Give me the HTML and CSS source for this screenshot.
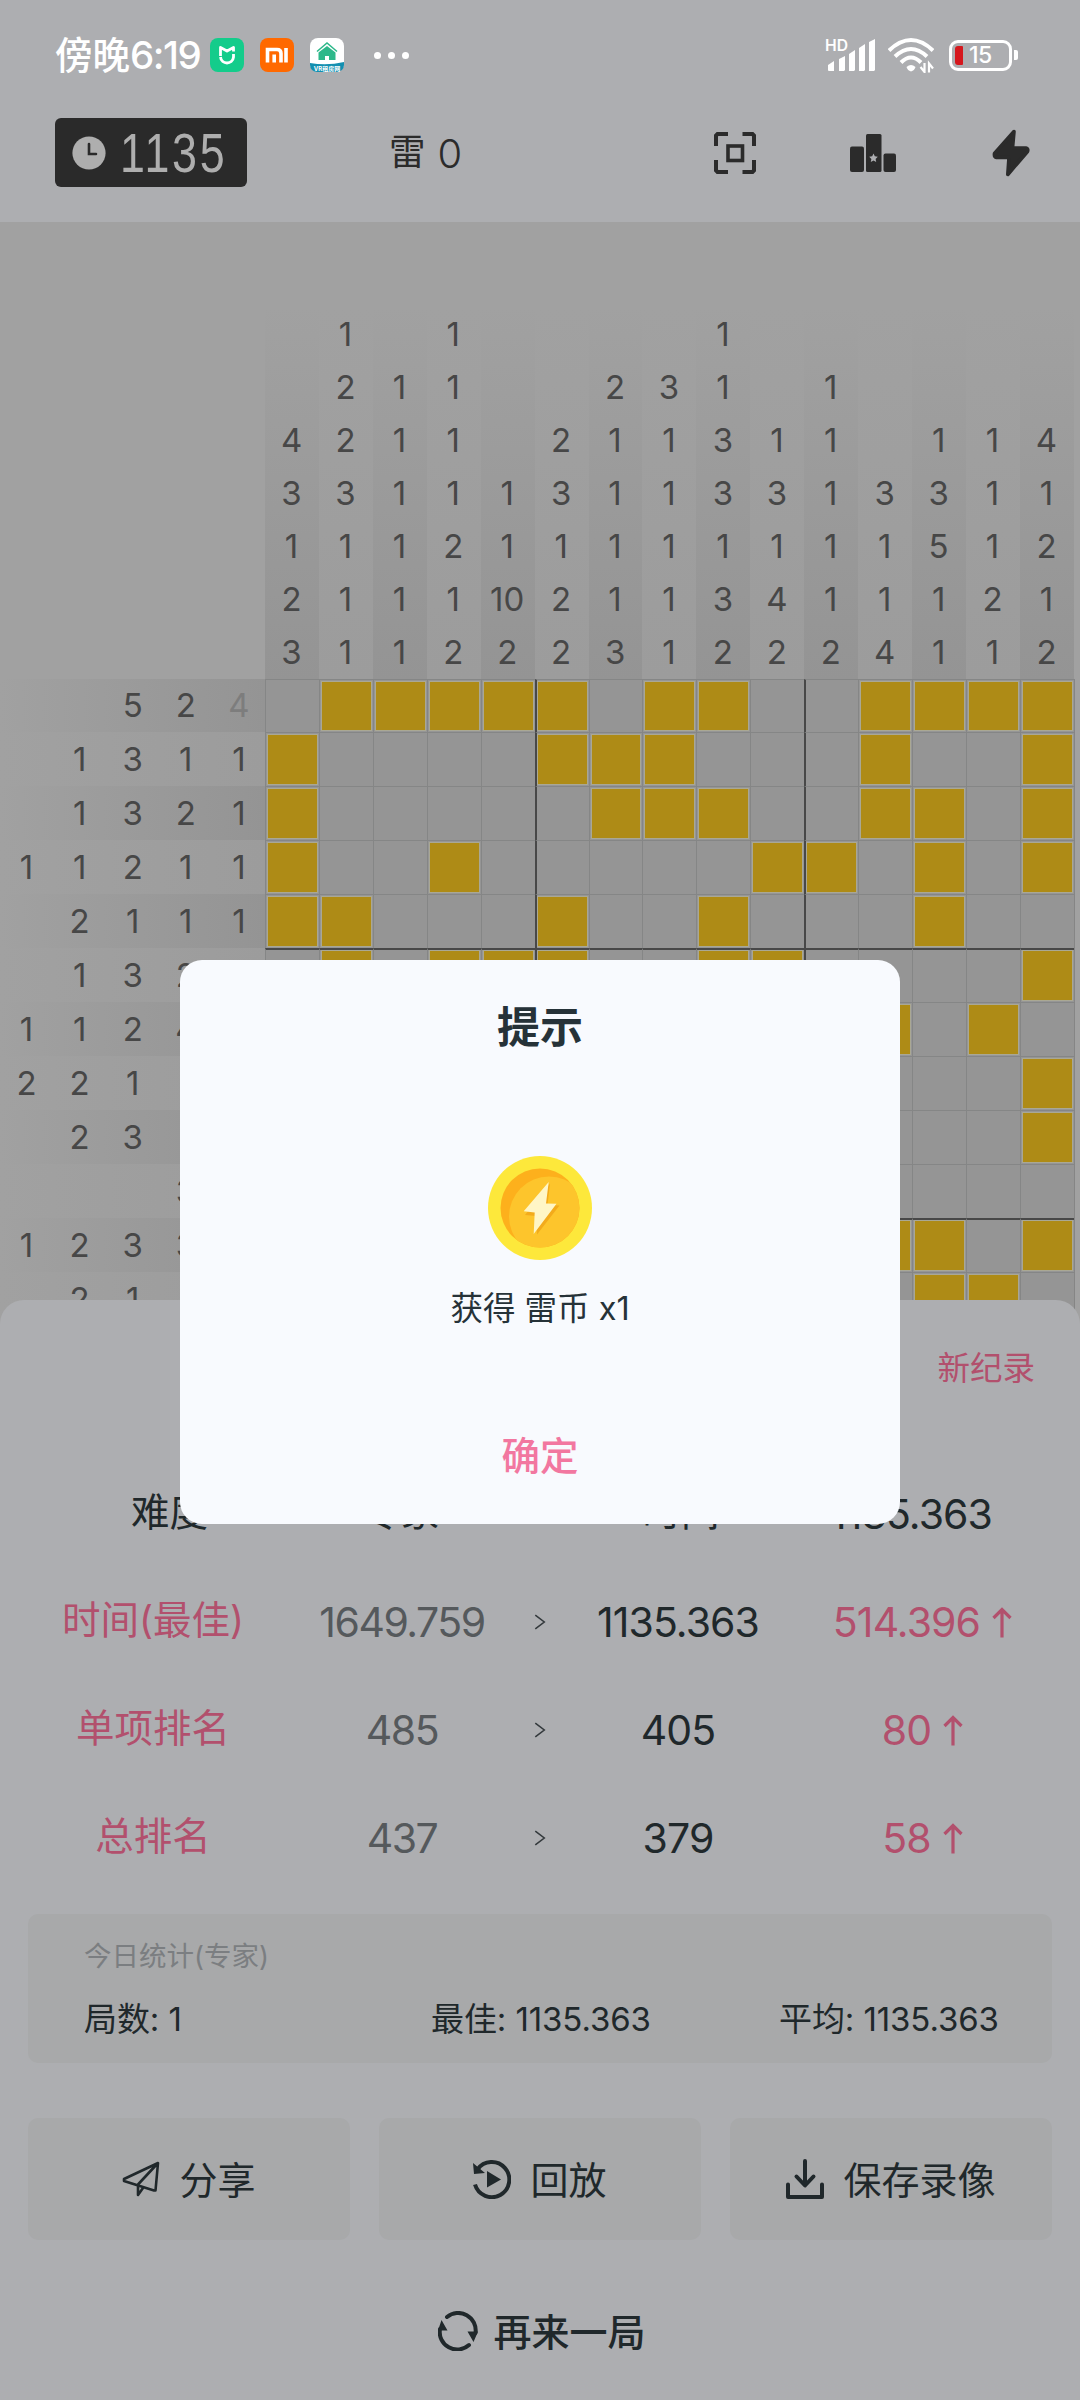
FILE: index.html
```html
<!DOCTYPE html>
<html lang="zh-CN">
<head>
<meta charset="utf-8">
<title>雷</title>
<link rel="stylesheet" href="styles.css">
</head>
<body>
<div class="screen">
  <div class="status">
    <span class="clock">傍晚<b class="clock-num">6:19</b></span>
    <svg class="app-icon" width="34" height="34" viewBox="0 0 34 34"><rect width="34" height="34" rx="8" fill="#14cc8b"/><path d="M10.500 18V9.500L17 13l6.500-3.500V13.500M10.500 19c.8 8 12.200 8 13 0V16" fill="none" stroke="#fff" stroke-width="2.800" stroke-linejoin="round"/></svg>
    <svg class="app-icon" width="34" height="34" viewBox="0 0 34 34"><rect width="34" height="34" rx="8" fill="#ff6900"/><path d="M7.500 24.500V11.500H17q4 0 4 4v9M14.200 16.500v8M26 10v14.500" fill="none" stroke="#fff" stroke-width="3.600"/></svg>
    <svg class="app-icon" width="34" height="34" viewBox="0 0 34 34"><rect width="34" height="34" rx="8" fill="#fff"/><path d="M0 25q17 3 34-1v3a7 7 0 0 1-7 7H7a7 7 0 0 1-7-7z" fill="#148fb0"/><path d="M8.500 14.500L17 8l8.500 6.500V22H19v-4h-4v4H8.500z" fill="#2db88a"/><path d="M7 13.500L17 5l10 8.500" fill="none" stroke="#2db88a" stroke-width="1.500"/><text x="17" y="32.500" text-anchor="middle" font-size="6" font-weight="700" fill="#fff">VR租房网</text></svg>
    <span class="dots"><i></i><i></i><i></i></span>
    <svg class="signal" width="50" height="36" viewBox="0 0 50 36"><text x="0" y="14" font-size="16" font-weight="600" fill="#fff" textLength="23" lengthAdjust="spacingAndGlyphs">HD</text><g fill="#fff"><path d="M3 28l6-4v10H4q-1 0-1-1zM14 22l6-3v14l-1 1h-5zM24 17l6-4v20l-1 1h-5zM34 11l6-4v26l-1 1h-5zM44 5l6-3v31l-1 1h-5z"/></g></svg>
    <svg class="wifi" width="46" height="36" viewBox="0 0 46 36"><g fill="none" stroke="#fff" stroke-width="4"><path d="M1 13.500q22-21 44 0M7 19.500q16-15 32 0M13 25.500q10-10 20 0"/></g><path d="M18.500 30q4.500-4 9 0-1 3.500-4.500 4.500-3.500-1-4.500-4.500z" fill="#fff"/><path d="M36.500 26v9l-4-5M41 35.500v-9l4 5" fill="none" stroke="#fff" stroke-width="2.200"/></svg>
    <span class="battery"><i class="charge"></i><span>15</span></span><i class="nub"></i>
  </div>

  <div class="toolbar">
    <div class="timer">
      <svg width="34" height="34" viewBox="0 0 34 34"><circle cx="17" cy="17" r="16.600" fill="#aeaeae"/><path d="M17 8v10h7" fill="none" stroke="#2a2a2a" stroke-width="2.600" stroke-linecap="round"/></svg>
      <span class="timer-num">1135</span>
    </div>
    <div class="mines">雷 <span>0</span></div>
    <svg class="t1" width="42" height="42" viewBox="0 0 42 42" fill="none" stroke="#2b2b2b" stroke-width="4"><path d="M2 14V3.500L3.500 2H14M28.500 2H38.500L40 3.500V14M40 28v10.500L38.500 40h-10M14 40H3.500L2 38.500V28"/><rect x="14" y="14" width="14.500" height="14.500" stroke-width="3.600"/></svg>
    <svg class="t2" width="46" height="38" viewBox="0 0 46 38" fill="#2b2b2b"><rect x="0" y="12.500" width="14" height="25.500" rx="2"/><rect x="16" y="0" width="15.500" height="38" rx="1.500"/><rect x="33.500" y="19.500" width="12.500" height="18.500" rx="2"/><path d="M23.500 19.500l1.300 2.800 3 .4-2.200 2.200.6 3.100-2.700-1.500-2.700 1.500.6-3.100-2.200-2.200 3-.4z" fill="#aeafb2"/></svg>
    <svg class="t3" width="38" height="48" viewBox="0 0 38 48"><path d="M22 2.500L2.500 24.500Q2 28 4.500 28.500H17L15.800 45.500 35.500 22.500Q36.500 19.500 34 19H20.500z" fill="#2b2b2b" stroke="#2b2b2b" stroke-width="3.600" stroke-linejoin="round"/></svg>
  </div>

  <div class="board">
    <div class="col-hints" id="colHints"></div>
    <div class="lower">
      <div class="row-hints" id="rowHints"></div>
      <div class="cells" id="cells"></div>
    </div>
  </div>

  <div class="sheet">
    <div class="record">新纪录</div>
    <div class="line first"><span class="label">难度</span><span class="label">专家</span><i></i><span class="label">时间</span><span class="num">1135.363</span></div>
    <div class="line"><span class="label pink">时间(最佳)</span><span class="num old">1649.759</span><svg class="chev" viewBox="0 0 14 20"><path d="M1.500 2L12 10 1.500 18"/></svg><span class="num">1135.363</span><span class="num pink">514.396<svg class="up" viewBox="0 0 20 31"><path d="M10 31V3M1.500 11.500L10 3l8.500 8.500"/></svg></span></div>
    <div class="line"><span class="label pink">单项排名</span><span class="num old">485</span><svg class="chev" viewBox="0 0 14 20"><path d="M1.500 2L12 10 1.500 18"/></svg><span class="num">405</span><span class="num pink">80<svg class="up" viewBox="0 0 20 31"><path d="M10 31V3M1.500 11.500L10 3l8.500 8.500"/></svg></span></div>
    <div class="line"><span class="label pink">总排名</span><span class="num old">437</span><svg class="chev" viewBox="0 0 14 20"><path d="M1.500 2L12 10 1.500 18"/></svg><span class="num">379</span><span class="num pink">58<svg class="up" viewBox="0 0 20 31"><path d="M10 31V3M1.500 11.500L10 3l8.500 8.500"/></svg></span></div>
    <div class="stats">
      <div class="stats-title">今日统计(专家)</div>
      <div class="stats-row"><span>局数: 1</span><span>最佳: 1135.363</span><span>平均: 1135.363</span></div>
    </div>
    <div class="actions">
      <div class="action"><svg width="38" height="36" viewBox="0 0 38 36" fill="none" stroke="#20282b" stroke-width="2.600" stroke-linejoin="round"><path d="M36 2L2 18v2l30 9.500h1.500zM36 2L16 23.500V34l5-7"/></svg><span>分享</span></div>
      <div class="action"><svg width="38" height="40" viewBox="0 0 38 40"><path d="M4.500 10.500A17.500 17.500 0 1 1 2 25.500" fill="none" stroke="#20282b" stroke-width="4"/><path d="M0 4l1 11 11-1zM14 12l14 8.500L14 28.500z" fill="#20282b"/></svg><span>回放</span></div>
      <div class="action"><svg width="38" height="40" viewBox="0 0 38 40" fill="none" stroke="#20282b" stroke-width="4" stroke-linecap="round" stroke-linejoin="round"><path d="M19 2v24M10.500 17.500l8.500 9 8.500-9M2 25.500V38h34V25.500"/></svg><span>保存录像</span></div>
    </div>
    <div class="again"><svg width="40" height="40" viewBox="0 0 40 40"><path d="M9 6A17.500 17.500 0 0 1 37.500 22M31 34A17.500 17.500 0 0 1 2 18" fill="none" stroke="#20282b" stroke-width="4" stroke-linecap="round"/><path d="M3.500 9l6 10.500H0zM35.500 31l-6-10.500H40z" fill="#20282b"/></svg><span>再来一局</span></div>
  </div>

  <div class="dialog">
    <div class="dialog-title">提示</div>
    <svg class="coin" width="104" height="104" viewBox="-52 -52 104 104"><defs><clipPath id="face"><circle r="39.500"/></clipPath></defs><circle r="52" fill="#fde83b"/><circle r="39.500" fill="#fdb01c"/><circle cx="9" cy="8.500" r="40" fill="#fdc52c" clip-path="url(#face)"/><path d="M10 -24.500L7.500-3l12 .5L-3 26.500-4 8l-11-1z" fill="#f3ab1b"/><path d="M8.700-26L6-4.500l10.500.3L-6.300 26l1-21.400-11-1.400z" fill="#fff6c6"/></svg>
    <div class="dialog-text">获得 雷币 x1</div>
    <div class="dialog-ok">确定</div>
  </div>
</div>
<script src="script.js"></script>
</body>
</html>
```
FILE: styles.css
```css
* { box-sizing: border-box; }
body { margin: 0; font-family: Inter, "Noto Sans CJK SC", sans-serif; }
svg { display: block; flex: none; }
i { display: block; flex: none; }
.screen { position: relative; width: 1080px; height: 2400px; overflow: hidden; background: #adaeb1; color: #20282b; }

.status { display: flex; align-items: center; height: 110px; padding: 0 62px 0 55px; color: #fff; }
.clock { width: 155px; font-size: 37.500px; font-weight: 500; line-height: 50px; white-space: nowrap; }
.clock-num { font-size: 38.500px; font-weight: 500; letter-spacing: -1.500px; }
.app-icon { margin-right: 16px; }
.dots { display: flex; gap: 7px; margin-left: 14px; }
.dots i { width: 7px; height: 7px; border-radius: 50%; background: #fff; }
.signal { margin-left: auto; overflow: visible; }
.wifi { margin-left: 13px; }
.battery { display: flex; align-items: center; gap: 6px; width: 63px; height: 31px; margin-left: 15px; padding-left: 3px; border: 3px solid #fff; border-radius: 9px; font-size: 23px; font-weight: 500; letter-spacing: -.500px; }
.charge { width: 8px; height: 19px; border-radius: 3px 1px 1px 3px; background: #d5171d; }
.nub { width: 4px; height: 10px; margin-left: 2px; border-radius: 0 2px 2px 0; background: #fff; }

.toolbar { display: flex; align-items: center; height: 112px; padding: 0 50px 26px 55px; }
.timer { display: flex; align-items: center; width: 192px; height: 69px; padding-left: 17px; border-radius: 6px; background: #2a2a2a; margin-top: -1px; }
.timer-num { margin-left: 14px; color: #aeaeae; font: 56px/69px "Liberation Sans", sans-serif; letter-spacing: 3.500px; transform: scaleX(.8); transform-origin: 0 50%; }
.mines { display: flex; align-items: center; gap: 12px; width: 324px; margin-left: 142px; font-size: 36.500px; line-height: 50px; color: #2b2b2b; padding-bottom: 2px; }
.mines span { font-size: 40px; font-weight: 300; line-height: 50px; padding-top: 3px; letter-spacing: -1px; }
.t1 { margin-left: 1px; }
.t2 { margin-left: 94px; }
.t3 { margin-left: 96px; }

.board { height: 1130px; padding-top: 85px; overflow: hidden; background: #a1a1a1; color: #474747; font-size: 33px; }
.col-hints { display: grid; grid-template-columns: repeat(15, 53.930px); margin-left: 265px; height: 371.500px; }
.col { display: flex; flex-direction: column; justify-content: flex-end; background: linear-gradient(#a1a1a1, #9c9c9c); }
.col:nth-child(odd) { background: linear-gradient(#a1a1a1, #949494); }
.hint { display: flex; align-items: center; justify-content: center; flex: none; width: 53.100px; height: 53.070px; }
.lower { display: flex; }
.row-hints { width: 265px; }
.row { display: flex; align-items: center; height: 53.930px; background: linear-gradient(90deg, #a1a1a1, #9c9c9c); }
.row:nth-child(odd) { background: linear-gradient(90deg, #a1a1a1, #949494); }
.done { color: #7d7d7d; }
.cells { display: grid; grid-template-columns: repeat(15, 53.930px); grid-auto-rows: 53.930px; border-right: 1px solid #858585; background: #959595; }
.cell { padding: 1px; border-left: 1px solid #858686; border-top: 1px solid #858686; }
.thick-left { border-left: 2px solid #484848; padding-left: 0; }
.thick-top { border-top: 2px solid #484848; padding-top: 0; }
.mine { width: 100%; height: 100%; border: 1px solid #aaa894; background: #ae8b16; }

.sheet { position: absolute; left: 0; right: 0; top: 1300px; height: 1100px; padding: 0 28px; border-radius: 24px 24px 0 0; background: #adaeb1; }
.record { height: 160px; padding: 44px 17px 0 0; text-align: right; font-size: 32.500px; line-height: 50px; color: #b2506d; }
.line { display: grid; grid-template-columns: 250px 248px 28px 248px 241px; align-items: center; justify-items: center; height: 108px; font-size: 39px; white-space: nowrap; }
.first { grid-template-columns: 231px 231px 50px 230px 230px; padding-left: 26px; }
.label { font-size: 38.500px; line-height: 50px; padding-bottom: 4px; }
.num { display: flex; align-items: center; font-size: 41px; letter-spacing: -.900px; }
.old { letter-spacing: -1.500px; color: #55595c; }
.pink { color: #b2506d; }
.chev { width: 12px; height: 18px; fill: none; stroke: #33393c; stroke-width: 1.800; }
.up { width: 20px; height: 34px; margin-left: 12px; fill: none; stroke: #b2506d; stroke-width: 3.200; }
.stats { height: 149px; margin-top: 22px; padding: 21px 57px 0 56px; border-radius: 10px; background: #a8a9aa; }
.stats-title { font-size: 27.500px; line-height: 42px; color: #7b7e81; }
.stats-row { display: grid; grid-template-columns: 347px 348px auto; margin-top: 17px; font-size: 33px; line-height: 50px; letter-spacing: -.100px; white-space: nowrap; }
.actions { display: grid; grid-template-columns: repeat(3, 1fr); gap: 29px; margin-top: 55px; }
.action { display: flex; align-items: center; justify-content: center; gap: 19px; height: 122px; border-radius: 10px; background: #a8a9aa; font-size: 38px; }
.action span, .again span { padding-bottom: 4px; }
.again { display: flex; align-items: center; justify-content: center; gap: 15px; height: 60px; margin: 61px 0 0 4px; font-size: 38px; font-weight: 500; }

.dialog { position: absolute; left: 180px; top: 960px; width: 720px; height: 564px; display: flex; flex-direction: column; align-items: center; border-radius: 22px; background: #f8fafe; color: #263238; }
.dialog-title { margin-top: 37px; font-size: 43px; line-height: 60px; font-weight: 700; }
.coin { margin-top: 99px; }
.dialog-text { margin-top: 24px; font-size: 32.500px; line-height: 50px; }
.dialog-ok { margin-top: 92px; font-size: 38.500px; line-height: 60px; font-weight: 500; color: #f277a0; }
```
FILE: script.js
```js
const columns = ['4 3 1 2 3', '1 2 2 3 1 1 1', '1 1 1 1 1 1', '1 1 1 1 2 1 2', '1 1 10 2',
  '2 3 1 2 2', '2 1 1 1 1 3', '3 1 1 1 1 1', '1 1 3 3 1 3 2', '1 3 1 4 2',
  '1 1 1 1 1 2', '3 1 1 4', '1 3 5 1 1', '1 1 1 2 1', '4 1 2 1 2'];
const rows = ['  52x', ' 1311', ' 1321', '11211', ' 2111', ' 132 ', '1124 ', '221  ', ' 23  ', '   3 ', '1233 ', ' 21  '];
const mines = [[2,3,4,5,6,8,9,12,13,14,15], [1,6,7,8,12,15], [1,7,8,9,12,13,15], [1,4,10,11,13,15],
  [1,2,6,9,13], [2,4,5,6,9,10,15], [12,14], [15], [15], [], [12,13,15], [13,14]];

document.getElementById('colHints').innerHTML = columns.map(c =>
  '<div class="col">' + c.split(' ').map(n => `<span class="hint">${n}</span>`).join('') + '</div>').join('');

// "x" marks the completed 4 in the first row
document.getElementById('rowHints').innerHTML = rows.map(r =>
  '<div class="row">' + [...r].map(n => n === 'x' ? '<span class="hint done">4</span>' : `<span class="hint">${n.trim()}</span>`).join('') + '</div>').join('');

let html = '';
mines.forEach((list, r) => {
  for (let c = 1; c <= 15; c++) {
    const cls = 'cell' + (c === 6 || c === 11 ? ' thick-left' : '') + (r === 5 || r === 10 ? ' thick-top' : '');
    html += `<div class="${cls}">${list.includes(c) ? '<div class="mine"></div>' : ''}</div>`;
  }
});
document.getElementById('cells').innerHTML = html;
```
